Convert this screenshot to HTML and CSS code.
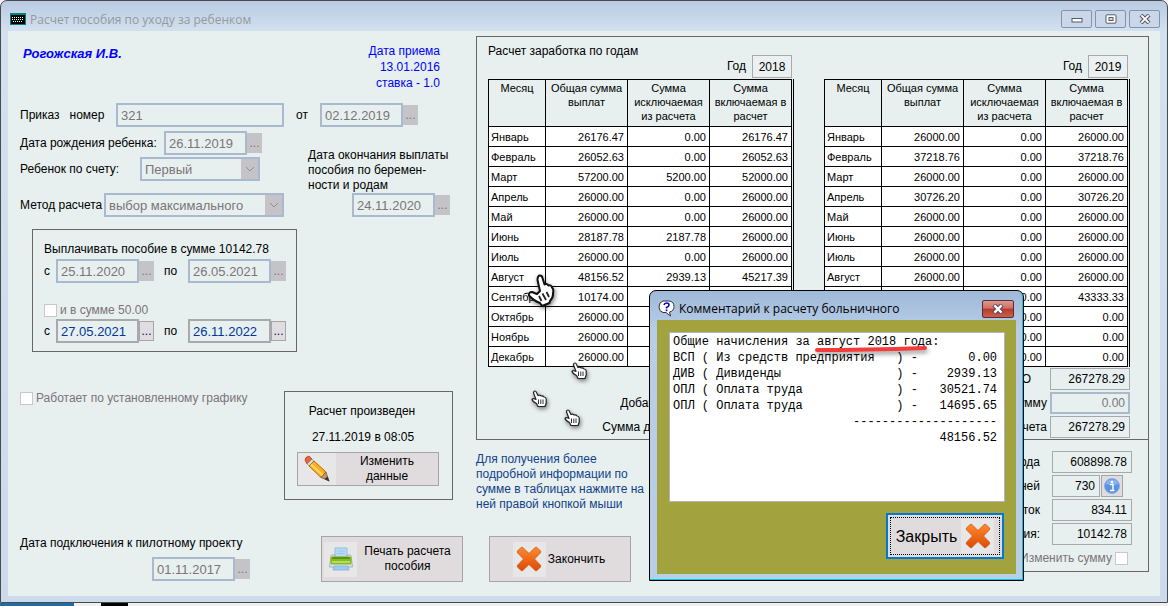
FILE: index.html
```
<!DOCTYPE html>
<html lang="ru">
  <head>
    <meta charset="UTF-8" />
    <meta name="viewport" content="width=device-width, initial-scale=1.0" />
    <title>Расчет пособия по уходу за ребенком</title>
    <link rel="stylesheet" href="styles.css">
  </head>
  <body>
    <!-- shared shapes -->
    <svg class="defs" width="0" height="0">
      <defs>
        <linearGradient id="orange" x1="0" y1="0" x2="0" y2="1">
          <stop offset="0" stop-color="#ff8a2c" />
          <stop offset="1" stop-color="#dc4a04" />
        </linearGradient>
        <symbol id="cross" viewBox="0 0 26 26">
          <path d="M5 1.500Q6 .8 7 1.700L13 7.500L19 1.700Q20 .8 21 1.500L24.500 5Q25.200 6 24.300 7L18.500 13L24.300 19Q25.200 20 24.500 21L21 24.500Q20 25.200 19 24.300L13 18.500L7 24.300Q6 25.200 5 24.500L1.500 21Q.8 20 1.700 19L7.500 13L1.700 7Q.8 6 1.500 5Z" fill="url(#orange)" stroke="#c8551a" stroke-width=".8" />
        </symbol>
        <symbol id="hand" viewBox="0 0 16 18">
          <path d="M2.500 3Q2.500 1 4 1Q5 1 5.500 2.500L7 5.500Q9 4.500 10 6Q12 5.500 13 7Q15 7 15.200 9V13L14 16.500H7L5.500 13.500Q1.500 11.500 1 9.500Q1.500 8 4 9L5 9.500Z" fill="#fff" stroke="#222" stroke-width="1.200" stroke-linejoin="round" />
          <path d="M7.500 9.500V14M9.800 9.500V14M12 9.500V14" fill="none" stroke="#333" />
        </symbol>
      </defs>
    </svg>

    <div class="window">
      <div class="titlebar">
        <svg class="app-icon" width="16" height="12" viewBox="0 0 16 12">
          <rect width="16" height="12" fill="#007f80" />
          <rect x="1" y="2" width="14" height="9" fill="#000" />
          <path d="M2 4.500H14M2 6.500H14M3 8.500H13" stroke="#fff" stroke-dasharray="1 1" />
        </svg>
        <span class="title">Расчет пособия по уходу за ребенком</span>
        <div class="win-buttons">
          <button type="button" aria-label="Свернуть"><svg width="12" height="10" viewBox="0 0 12 10"><rect x="1" y="4.500" width="10" height="3.500" fill="#fff" stroke="#555a68" /></svg></button>
          <button type="button" aria-label="Развернуть"><svg width="12" height="10" viewBox="0 0 12 10"><rect x="1" y=".8" width="10" height="8.400" rx="1" fill="#fff" stroke="#555a68" /><rect x="4" y="3.500" width="4" height="3" fill="#cdd" stroke="#555a68" /></svg></button>
          <button type="button" aria-label="Закрыть"><svg width="12" height="10" viewBox="0 0 12 10"><path d="M2 1L10 9M10 1L2 9" stroke="#555a68" stroke-width="4" /><path d="M2.400 1.400L9.600 8.600M9.600 1.400L2.400 8.600" stroke="#fff" stroke-width="2" /></svg></button>
        </div>
      </div>

      <div class="client">
        <div class="left">
          <div class="head">
            <span class="person">Рогожская И.В.</span>
            <div class="hire">Дата приема<br />13.01.2016<br />ставка - 1.0</div>
          </div>

          <div class="row order">
            <label class="order-label" for="order">Приказ &nbsp; номер</label>
            <input class="field order-field" type="text" id="order" value="321" disabled />
            <label class="from" for="orderDate">от</label>
            <input class="field date" type="text" id="orderDate" value="02.12.2019" disabled /><button class="dots" type="button" disabled>...</button>
          </div>

          <div class="columns">
            <div class="params">
              <div class="row">
                <label class="birth-label" for="birth">Дата рождения ребенка:</label>
                <input class="field date" type="text" id="birth" value="26.11.2019" disabled /><button class="dots" type="button" disabled>...</button>
              </div>
              <div class="row child">
                <label class="child-label" for="child">Ребенок по счету:</label>
                <div class="combo child-combo">
                  <select id="child" disabled><option>Первый</option></select>
                  <span class="arrow"><svg width="10" height="6" viewBox="0 0 10 6"><path d="M1 1L5 5L9 1" fill="none" stroke="#909094" /></svg></span>
                </div>
              </div>
              <div class="row">
                <label class="method-label" for="method">Метод расчета</label>
                <div class="combo method-combo">
                  <select id="method" disabled><option>выбор максимального</option></select>
                  <span class="arrow"><svg width="10" height="6" viewBox="0 0 10 6"><path d="M1 1L5 5L9 1" fill="none" stroke="#909094" /></svg></span>
                </div>
              </div>
            </div>
            <div class="maternity">
              <label for="matEnd">Дата окончания выплаты<br />пособия по беремен-<br />ности и родам</label>
              <div class="row mat-row">
                <input class="field date" type="text" id="matEnd" value="24.11.2020" disabled /><button class="dots" type="button" disabled>...</button>
              </div>
            </div>
          </div>

          <div class="box pay">
            <div>Выплачивать пособие в сумме 10142.78</div>
            <div class="row">
              <label class="c" for="from1">с</label>
              <input class="field date" type="text" id="from1" value="25.11.2020" disabled /><button class="dots" type="button" disabled>...</button>
              <label class="po" for="to1">по</label>
              <input class="field date" type="text" id="to1" value="26.05.2021" disabled /><button class="dots" type="button" disabled>...</button>
            </div>
            <div class="row check-row pay-check">
              <input type="checkbox" id="and50" disabled />
              <label for="and50">и в сумме 50.00</label>
            </div>
            <div class="row">
              <label class="c" for="from2">с</label>
              <input class="field date" type="text" id="from2" value="27.05.2021" /><button class="dots" type="button">...</button>
              <label class="po" for="to2">по</label>
              <input class="field date" type="text" id="to2" value="26.11.2022" /><button class="dots" type="button">...</button>
            </div>
          </div>

          <div class="status">
            <div class="row check-row">
              <input type="checkbox" id="schedule" disabled />
              <label for="schedule">Работает по установленному графику</label>
            </div>
            <div class="box done">
              <div>Расчет произведен</div>
              <div class="done-date">27.11.2019 в 08:05</div>
              <button class="btn edit" type="button">
                <span class="pic"><svg width="28" height="28" viewBox="0 0 28 28">
                  <path d="M2 5Q2 2 6 1L9 4L4 9Z" fill="#f0603a" stroke="#a8401c" stroke-width=".8" />
                  <path d="M4 9L9 4L11 6L6 11Z" fill="#d7dbe0" stroke="#777" stroke-width=".6" />
                  <path d="M6 11L11 6L23 17L18 22.500Z" fill="#ffae1c" stroke="#a8610c" stroke-width=".9" />
                  <path d="M8 9.500L20 20.500" stroke="#ffda6a" stroke-width="2" />
                  <path d="M18 22.500L23 17L26 26Z" fill="#c79468" stroke="#7a5230" stroke-width=".7" />
                  <path d="M21.500 24L24.500 21.500L26.500 26.500Z" fill="#333" />
                </svg></span>
                <span class="caption">Изменить<br />данные</span>
              </button>
            </div>
          </div>

          <div class="bottom">
            <div class="pilot">
              <label for="pilot">Дата подключения к пилотному проекту</label>
              <div class="row pilot-row">
                <input class="field date" type="text" id="pilot" value="01.11.2017" disabled /><button class="dots" type="button" disabled>...</button>
              </div>
            </div>
            <button class="btn print" type="button">
              <span class="pic"><svg width="26" height="26" viewBox="0 0 26 26">
                <path d="M7 2H19V12H7Z" fill="#b9dcf6" stroke="#8fbfe6" />
                <path d="M9 5H17M9 7.500H17" stroke="#9cc6ea" />
                <path d="M3 10Q3 9 4 9H7V11H19V9H22Q23 9 23 10L24.500 21H1.500Z" fill="#dfe2e5" stroke="#9aa2a8" stroke-width=".8" />
                <rect x="2.500" y="10.500" width="21" height="8" rx="1.500" fill="#86bd22" />
                <rect x="4" y="11" width="18" height="2" fill="#5f9410" />
                <rect x="4" y="15" width="18" height="2" fill="#b4dc60" />
                <path d="M6 20H20L21 24H5Z" fill="#9fcbf0" stroke="#78aada" stroke-width=".7" />
              </svg></span>
              <span class="caption">Печать расчета<br />пособия</span>
            </button>
          </div>
        </div>

        <div class="right">
          <div class="earnings">
            <div class="earnings-title">Расчет заработка по годам</div>
            <div class="years" id="years"></div>
          </div>

          <div class="lower">
            <div class="help">
              <p>Для получения более подробной информации по сумме в таблицах нажмите на ней правой кнопкой мыши</p>
              <button class="btn finish" type="button">
                <span class="pic"><svg width="26" height="26"><use href="#cross" /></svg></span>
                <span>Закончить</span>
              </button>
            </div>
            <div class="totals">
              <div class="sum-row"><label for="t1">Всего за 2 года</label><input class="sum" type="text" id="t1" value="608898.78" readonly /></div>
              <div class="sum-row"><label for="t2">Количество дней</label>
                <div class="days"><input class="sum" type="text" id="t2" value="730" readonly />
                  <button class="info" type="button" aria-label="Информация"><svg width="16" height="16" viewBox="0 0 16 16"><circle cx="8" cy="8" r="7.500" fill="#5b93e0" stroke="#86aee6" /><path d="M2 6Q3 1.500 8 1.500Q13 1.500 14 6Q8 8 2 6Z" fill="#8cb4ec" /><rect x="7" y="3" width="2" height="2" fill="#fff" /><path d="M6 6.500H9V12M6 12.500H10.500" fill="none" stroke="#fff" stroke-width="1.400" /></svg></button>
                </div>
              </div>
              <div class="sum-row"><label for="t3">Заработок в сутки: итог/суток</label><input class="sum" type="text" id="t3" value="834.11" readonly /></div>
              <div class="sum-row"><label for="t4">Сумма пособия:</label><input class="sum" type="text" id="t4" value="10142.78" readonly /></div>
              <div class="row check-row change">
                <label for="change">Изменить сумму</label>
                <input type="checkbox" id="change" disabled />
              </div>
            </div>
          </div>
        </div>
      </div>

      <svg class="hand hand-big" width="28" height="34" viewBox="0 0 28 34">
        <path d="M10.500 6Q10.500 1.500 13 1.500Q15 1.500 15.500 4L17.500 10.500Q20 9 21.500 11.500Q24 10.500 25 13.500Q27 15.500 26 19Q26.500 23.500 23 27L22.500 29L15 32L13 29Q7 27 2 21.500Q1.500 18 5 18L10 20L13 17Z" fill="#fff" stroke="#111" stroke-width="2" stroke-linejoin="round" />
        <path d="M12 22L14.500 27M15.500 19.500L19 26M19.500 18L22 23" fill="none" stroke="#222" stroke-width="1.800" />
      </svg>
      <svg class="hand hand-1" width="16" height="18"><use href="#hand" /></svg>
      <svg class="hand hand-2" width="16" height="18"><use href="#hand" /></svg>
      <svg class="hand hand-3" width="16" height="18"><use href="#hand" /></svg>

      <div class="dialog" role="dialog" aria-labelledby="dialogTitle">
        <div class="dialog-bar">
          <svg width="17" height="17" viewBox="0 0 17 17">
            <path d="M5 1H11Q16 1.500 16 6.500Q16 11 11.500 12L12.500 16L8 12.500H5Q1 11.500 1 7Q1 2 5 1Z" fill="#fff" stroke="#333" />
            <path d="M6 5Q6.500 3 8.500 3Q11 3 11 5Q11 6.500 8.500 7.500V8.500" fill="none" stroke="#0000d8" stroke-width="1.600" />
            <rect x="7.700" y="9.500" width="1.700" height="1.700" fill="#0000d8" />
          </svg>
          <span id="dialogTitle">Комментарий к расчету больничного</span>
          <button class="close-x" type="button" aria-label="Закрыть"><svg width="12" height="10" viewBox="0 0 12 10"><path d="M2 1L10 9M10 1L2 9" stroke="#54405a" stroke-width="4.400" /><path d="M2.400 1.400L9.600 8.600M9.600 1.400L2.400 8.600" stroke="#fff" stroke-width="2.400" /></svg></button>
        </div>
        <div class="dialog-body">
          <div class="memo">
<pre>Общие начисления за август 2018 года:
ВСП ( Из средств предприятия   ) -       0.00
ДИВ ( Дивиденды                ) -    2939.13
ОПЛ ( Оплата труда             ) -   30521.74
ОПЛ ( Оплата труда             ) -   14695.65
                         --------------------
                                     48156.52</pre>
            <svg class="mark" width="112" height="10" viewBox="0 0 112 10"><path d="M2 6Q50 6 110 4" fill="none" stroke="#f43c3c" stroke-width="4" stroke-linecap="round" /></svg>
          </div>
          <button class="btn close" type="button">
            <span>Закрыть</span>
            <span class="pic"><svg width="26" height="26"><use href="#cross" /></svg></span>
          </button>
        </div>
      </div>
    </div>
    <div class="taskbar"><span class="task"></span><span class="task-icon"></span></div>

    <script>
      const months = ['Январь', 'Февраль', 'Март', 'Апрель', 'Май', 'Июнь', 'Июль', 'Август', 'Сентябрь', 'Октябрь', 'Ноябрь', 'Декабрь'];

      // [total, excluded] per month
      const years = [
        {
          year: 2018,
          rows: [[26176.47, 0], [26052.63, 0], [57200, 5200], [26000, 0], [26000, 0], [28187.78, 2187.78],
            [26000, 0], [48156.52, 2939.13], [10174, 0], [26000, 0], [26000, 0], [26000, 0]]
        },
        {
          year: 2019,
          rows: [[26000, 0], [37218.76, 0], [26000, 0], [30726.2, 0], [26000, 0], [26000, 0],
            [26000, 0], [26000, 0], [43333.33, 0], [0, 0], [0, 0], [0, 0]]
        }
      ];

      function renderYear(item) {
        let body = '';
        let total = 0;
        item.rows.forEach((row, i) => {
          const included = row[0] - row[1];
          total += included;
          body += `<tr><td>${months[i]}</td><td>${row[0].toFixed(2)}</td><td>${row[1].toFixed(2)}</td><td>${included.toFixed(2)}</td></tr>`;
        });
        const y = item.year;
        return `<div class="year">
          <div class="year-row"><label for="y${y}">Год</label><input type="text" id="y${y}" value="${y}" readonly /></div>
          <div class="table-frame"><table>
            <thead><tr><th>Месяц</th><th>Общая сумма выплат</th><th>Сумма исключаемая из расчета</th><th>Сумма включаемая в расчет</th></tr></thead>
            <tbody>${body}</tbody>
          </table></div>
          <div class="sum-row"><label class="itogo" for="i${y}">ИТОГО</label><input class="sum" type="text" id="i${y}" value="${total.toFixed(2)}" readonly /></div>
          <div class="sum-row"><label for="a${y}">Добавить сумму</label><input class="sum" type="text" id="a${y}" value="0.00" disabled /></div>
          <div class="sum-row"><label for="s${y}">Сумма для расчета</label><input class="sum" type="text" id="s${y}" value="${total.toFixed(2)}" readonly /></div>
        </div>`;
      }

      document.getElementById('years').innerHTML = years.map(renderYear).join('');
    </script>
  </body>
</html>
```
FILE: styles.css
```
* {
  box-sizing: border-box;
}
body {
  margin: 0;
  background: #f0f0f0;
  font-family: "Liberation Sans", Arial, sans-serif;
  font-size: 12px;
  line-height: 15px;
  color: #000000;
}
input,
select,
button {
  font-family: inherit;
  font-size: 12px;
  margin: 0;
}
.defs {
  position: absolute;
}

/* main window */
.window {
  position: relative;
  border: 1px solid #4a4a4e;
  border-radius: 7px 7px 0 0;
  padding: 0 7px 6px;
  background: linear-gradient(#b9cbe2, #d3e0ef 30px, #ccdaec);
}
.titlebar {
  display: flex;
  align-items: center;
  height: 30px;
  padding: 6px 0 0 2px;
  gap: 4px;
  font-family: "Open Sans", "Noto Sans", sans-serif;
}
.title {
  color: #96999d;
}
.win-buttons {
  display: flex;
  gap: 3px;
  margin-left: auto;
}
.win-buttons button {
  display: flex;
  align-items: center;
  justify-content: center;
  width: 31px;
  height: 18px;
  padding: 0;
  border: 1px solid #8492ae;
  border-radius: 2px;
  background: #c9d7e8;
}
.client {
  display: grid;
  grid-template-columns: 468px 1fr;
  background: #e7f0ef;
}

/* left part */
.left {
  padding: 12px 0 14px 12px;
}
.row {
  display: flex;
  align-items: center;
}
.head {
  display: flex;
  justify-content: space-between;
  padding: 0 36px 0 3px;
  height: 60px;
}
.person {
  margin-top: 3px;
  font-size: 13px;
  font-weight: bold;
  font-style: italic;
  color: #0000ff;
}
.hire {
  text-align: right;
  line-height: 16px;
  color: #0000ff;
}
.field {
  width: 83px;
  height: 24px;
  padding: 0 3px;
  border: 2px solid #a8a9ae;
  background: #e7f0ef;
  font-size: 13px;
  color: #00379b;
}
.field:disabled {
  border-color: #a9b9d0;
  color: #7c7478;
}
.dots {
  width: 15px;
  height: 20px;
  padding: 0;
  border: 1px solid #a8a4a8;
  background: #e0dde0;
  color: #000050;
}
.dots:disabled {
  border-color: #c4c3c7;
  background: #c4c3c7;
  color: #77757a;
}
.order-label {
  width: 96px;
}
.order-field {
  width: 168px;
}
.from {
  width: 36px;
  padding-left: 12px;
}
.columns {
  display: flex;
  gap: 24px;
  margin-top: 4px;
}
.params {
  width: 264px;
}
.birth-label {
  width: 144px;
  white-space: nowrap;
}
.child {
  margin: 2px 0 12px;
}
.child-label {
  width: 120px;
}
.method-label {
  width: 84px;
  white-space: nowrap;
}
.combo {
  display: flex;
  height: 24px;
  border: 2px solid #a9b9d0;
}
.child-combo {
  width: 120px;
}
.method-combo {
  width: 180px;
}
.combo select {
  flex: 1;
  min-width: 0;
  padding: 0 3px;
  border: none;
  appearance: none;
  background: #e7f0ef;
  font-size: 13px;
  color: #7c7478;
  opacity: 1;
}
.arrow {
  display: flex;
  align-items: center;
  justify-content: center;
  width: 17px;
  background: #c4c3c7;
}
.maternity {
  padding-top: 17px;
  white-space: nowrap;
}
.mat-row {
  padding-left: 44px;
}
.box {
  border: 1px solid #6a6664;
}
.pay {
  width: 265px;
  margin: 12px 0 0 12px;
  padding: 12px 0 8px 11px;
}
.pay .row + .check-row {
  margin: 20px 0 1px;
}
.pay > div:first-child {
  margin-bottom: 2px;
}
.c {
  width: 12px;
}
.po {
  width: 34px;
  padding-left: 10px;
}
.check-row {
  gap: 3px;
  color: #7c7478;
}
input[type="checkbox"] {
  appearance: none;
  width: 13px;
  height: 13px;
  border: 1px solid #c6c8ca;
  background: #ffffff;
}
.status {
  display: flex;
  align-items: flex-start;
  justify-content: space-between;
  margin-top: 39px;
  padding-right: 23px;
}
.done {
  width: 169px;
  padding: 12px 13px 13px 12px;
  text-align: center;
}
.done > div:first-child {
  padding-right: 12px;
}
.done-date {
  margin: 11px 0 7px;
  padding-right: 10px;
}
.btn {
  display: flex;
  align-items: center;
  border: 1px solid #a8a4a6;
  background: #e0dcdd;
  line-height: 15px;
  color: #000000;
}
.pic {
  display: flex;
  align-items: center;
  justify-content: center;
  background: #e7e7e8;
}
.edit {
  width: 142px;
  height: 34px;
  padding: 0;
}
.edit .pic {
  width: 38px;
  height: 32px;
}
.caption {
  flex: 1;
}
.bottom {
  display: flex;
  justify-content: space-between;
  margin-top: 36px;
  padding-right: 13px;
}
.pilot-row {
  margin-top: 6px;
  padding-left: 132px;
}
.print,
.finish {
  width: 142px;
  height: 46px;
  padding: 0 4px 0 2px;
}
.print .pic,
.finish .pic {
  width: 33px;
  height: 35px;
}

/* right part */
.right {
  padding: 5px 11px 0 0;
}
.earnings {
  padding: 7px 18px 0 11px;
  border: 1px solid #6a6664;
}
.earnings-title {
  height: 11px;
}
.years {
  display: grid;
  grid-template-columns: 1fr 1fr;
  gap: 30px;
}
.year-row {
  display: flex;
  align-items: center;
  justify-content: flex-end;
  gap: 6px;
  padding-right: 2px;
  margin-bottom: 1px;
}
.year-row input {
  width: 40px;
  height: 23px;
  padding: 0;
  border: 1px solid #a8a9ae;
  background: #ebf0f0;
  text-align: center;
}
.table-frame {
  padding-right: 1px;
  border-right: 1px solid #000000;
}
table {
  width: 100%;
  table-layout: fixed;
  border-collapse: collapse;
  font-size: 11px;
}
th,
td {
  border: 1px solid #000000;
}
th {
  height: 47px;
  padding: 1px 0 0;
  font-weight: normal;
  line-height: 14px;
  vertical-align: top;
}
th:first-child {
  width: 57px;
}
td {
  height: 20px;
  padding: 0 3px 0 2px;
  background: #ffffff;
  line-height: 14px;
  text-align: right;
}
td:first-child {
  text-align: left;
}
.sum-row {
  display: flex;
  align-items: center;
  justify-content: flex-end;
  gap: 3px;
  height: 24px;
  white-space: nowrap;
}
.itogo {
  padding-right: 16px;
}
.sum {
  width: 80px;
  height: 22px;
  padding: 0 4px;
  border: 1px solid #a8a9ae;
  background: #e7f0ef;
  font-size: 12px;
  text-align: right;
}
.sum:disabled {
  border: 2px solid #a9b9d0;
  padding: 0 3px;
  color: #7c7478;
}
.lower {
  display: flex;
}
.help {
  width: 180px;
  padding-top: 12px;
  color: #123f8c;
}
.help p {
  width: 175px;
  margin: 0;
}
.finish {
  justify-content: center;
  gap: 2px;
  margin: 24px 0 0 13px;
}
.totals {
  flex: 1;
  padding: 10px 16px 0 0;
  height: 132px;
  border-right: 1px solid #6a6664;
  border-bottom: 1px solid #6a6664;
}
.totals .sum-row {
  gap: 12px;
}
.days {
  display: flex;
  gap: 1px;
  width: 80px;
}
.days .sum {
  width: 48px;
}
.info {
  display: flex;
  align-items: center;
  justify-content: center;
  width: 22px;
  height: 22px;
  padding: 0;
  border: 1px solid #a8a4a6;
  background: #dedcdf;
}
.change {
  justify-content: flex-end;
  padding: 5px 4px 0 0;
}

/* pointers over the tables */
.hand {
  position: absolute;
  filter: drop-shadow(1px 2px 2px rgba(0, 0, 0, 0.5));
}
.hand-big {
  left: 526px;
  top: 273px;
}
.hand-1 {
  left: 570px;
  top: 361px;
}
.hand-2 {
  left: 530px;
  top: 389px;
}
.hand-3 {
  left: 563px;
  top: 408px;
}

/* comment dialog */
.dialog {
  position: absolute;
  left: 648px;
  top: 289px;
  width: 375px;
  padding: 0 7px 6px;
  border: 1px solid #000000;
  border-radius: 7px 7px 0 0;
  background: linear-gradient(#9fb9d8, #b8cee8 40px, #b8cfe8);
  box-shadow: inset -1px -1px 0 #00c8e8;
}
.dialog-bar {
  display: flex;
  align-items: center;
  gap: 4px;
  height: 29px;
  padding: 6px 2px 0 1px;
  font-family: "Open Sans", "Noto Sans", sans-serif;
}
.close-x {
  display: flex;
  align-items: center;
  justify-content: center;
  width: 32px;
  height: 18px;
  margin-left: auto;
  padding: 0;
  border: 1px solid #5c2c34;
  border-radius: 2px;
  background: linear-gradient(#dc9a90, #cf7062 45%, #b83a28 50%, #c8614e);
}
.dialog-body {
  padding: 12px 11px 12px 12px;
  background: #a2a23e;
}
.memo {
  position: relative;
  height: 170px;
  padding: 1px 3px;
  border: 1px solid #b4b4b8;
  background: #ffffff;
}
.memo pre {
  margin: 0;
  font-family: "Liberation Mono", "Courier New", monospace;
  font-size: 12px;
  line-height: 16px;
}
.mark {
  position: absolute;
  left: 145px;
  top: 11px;
  filter: drop-shadow(1px 3px 2px rgba(0, 0, 0, 0.4));
}
.close {
  width: 118px;
  height: 46px;
  margin: 11px 1px 3px auto;
  padding: 0 6px;
  gap: 4px;
  justify-content: center;
  border: 2px solid #0078d7;
  outline: 1px dotted #000000;
  outline-offset: -5px;
  font-size: 16px;
}
.close .pic {
  width: 33px;
  height: 34px;
}

/* strip under the window */
.taskbar {
  display: flex;
  gap: 27px;
  height: 3px;
}
.task {
  width: 74px;
  background: #1f6ba5;
}
.task-icon {
  width: 27px;
  background: #000000;
}
```
